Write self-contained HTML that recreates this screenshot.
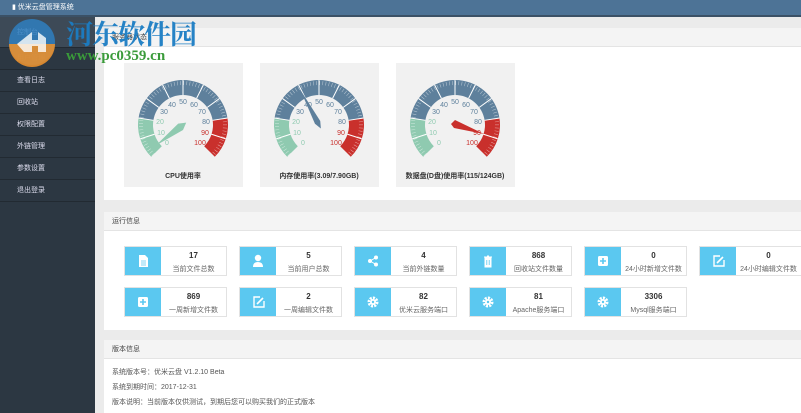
<!DOCTYPE html>
<html><head><meta charset="utf-8"><style>
*{margin:0;padding:0;box-sizing:border-box}
body{width:801px;height:413px;overflow:hidden;background:#ebebeb;font-family:"Liberation Sans","Noto Sans CJK SC",sans-serif;position:relative;color:#333}
.top{position:absolute;left:0;top:0;width:801px;height:17px;background:#4d7396;border-bottom:2px solid #3b5166;color:#fff;font-size:7px;line-height:15px;padding-left:12px}
.side{position:absolute;left:0;top:17px;width:95px;height:396px;background:#2c3742}
.side div{height:22px;line-height:22px;font-size:7px;color:#dde;padding-left:17px;border-bottom:1px solid #222a32}
.side .act{height:31px;line-height:31px;background:#3d4a57}
.panel{position:absolute;left:104px;width:697px;background:#fff}
.ph{height:19px;line-height:19px;background:#f4f4f4;border-bottom:1px solid #e4e4e4;font-size:7px;padding-left:8px;color:#444}
.g{position:absolute;top:35px;width:119px;height:124px;background:#f1f1f1}
.item{position:absolute;width:103px;height:30px;border:1px solid #e2e2e2;background:#fff}
.item .ic{position:absolute;left:0;top:0;width:36px;height:28px;background:#5bc8f0}
.item .n{position:absolute;left:36px;right:0;top:4px;text-align:center;font-size:8px;font-weight:bold;color:#333}
.item .l{position:absolute;left:36px;right:0;top:17px;text-align:center;font-size:7px;color:#666;white-space:nowrap}
.vt{font-size:7px;color:#555;position:absolute;left:8px}
</style></head><body>
<div class="top">▮ 优米云盘管理系统</div>
<div class="side">
<div class="act">控制台</div><div>用户管理</div><div>查看日志</div><div>回收站</div><div>权限配置</div><div>外链管理</div><div>参数设置</div><div>退出登录</div>
</div>

<div class="panel" style="top:28px;height:172px">
<div class="ph">服务器状态</div>
<div class="g" style="left:20px"><svg width="119" height="124" font-size="7" text-anchor="middle" font-family="Liberation Sans">
<path d="M27.2,93.8 A45,45 0 0 1 14.55,54.96 L29.37,57.31 A30,30 0 0 0 37.8,83.2 Z" fill="#8fcab0"/>
<path d="M14.55,54.96 A45,45 0 0 1 103.45,54.96 L88.63,57.31 A30,30 0 0 0 29.37,57.31 Z" fill="#5e809c"/>
<path d="M103.45,54.96 A45,45 0 0 1 90.8,93.8 L80.2,83.2 A30,30 0 0 0 88.63,57.31 Z" fill="#c9302c"/>
<path d="M29.3,91.7 A42,42 0 1 1 88.7,91.7" fill="none" stroke="#fff" stroke-width="4" stroke-dasharray="0.5 2.6" opacity=".6"/>
<g stroke="#fff" stroke-width="1"><line x1="16.2" y1="75.9" x2="30.47" y2="71.27"/><line x1="14.55" y1="54.96" x2="29.37" y2="57.31"/><line x1="22.6" y1="35.55" x2="34.73" y2="44.37"/><line x1="38.57" y1="21.9" x2="45.38" y2="35.27"/><line x1="59" y1="17" x2="59" y2="32"/><line x1="79.43" y1="21.9" x2="72.62" y2="35.27"/><line x1="95.4" y1="35.55" x2="83.27" y2="44.37"/><line x1="103.45" y1="54.96" x2="88.63" y2="57.31"/><line x1="101.8" y1="75.9" x2="87.53" y2="71.27"/></g>
<g dominant-baseline="middle"><text x="43" y="80" fill="#8fcab0">0</text><text x="37" y="70" fill="#8fcab0">10</text><text x="36" y="59" fill="#8fcab0">20</text><text x="40" y="49" fill="#5e809c">30</text><text x="48" y="42" fill="#5e809c">40</text><text x="59" y="39" fill="#5e809c">50</text><text x="70" y="42" fill="#5e809c">60</text><text x="78" y="49" fill="#5e809c">70</text><text x="82" y="59" fill="#5e809c">80</text><text x="81" y="70" fill="#c9302c">90</text><text x="76" y="80" fill="#c9302c">100</text></g>
<polygon points="59,66 55,59 59,28 63,59" fill="#8fcab0" transform="rotate(-127 59 62)"/>
<text x="59" y="115" font-weight="bold" fill="#333" font-family="Liberation Sans,Noto Sans CJK SC">CPU使用率</text></svg></div>

<div class="g" style="left:156px"><svg width="119" height="124" font-size="7" text-anchor="middle" font-family="Liberation Sans">
<path d="M27.2,93.8 A45,45 0 0 1 14.55,54.96 L29.37,57.31 A30,30 0 0 0 37.8,83.2 Z" fill="#8fcab0"/>
<path d="M14.55,54.96 A45,45 0 0 1 103.45,54.96 L88.63,57.31 A30,30 0 0 0 29.37,57.31 Z" fill="#5e809c"/>
<path d="M103.45,54.96 A45,45 0 0 1 90.8,93.8 L80.2,83.2 A30,30 0 0 0 88.63,57.31 Z" fill="#c9302c"/>
<path d="M29.3,91.7 A42,42 0 1 1 88.7,91.7" fill="none" stroke="#fff" stroke-width="4" stroke-dasharray="0.5 2.6" opacity=".6"/>
<g stroke="#fff" stroke-width="1"><line x1="16.2" y1="75.9" x2="30.47" y2="71.27"/><line x1="14.55" y1="54.96" x2="29.37" y2="57.31"/><line x1="22.6" y1="35.55" x2="34.73" y2="44.37"/><line x1="38.57" y1="21.9" x2="45.38" y2="35.27"/><line x1="59" y1="17" x2="59" y2="32"/><line x1="79.43" y1="21.9" x2="72.62" y2="35.27"/><line x1="95.4" y1="35.55" x2="83.27" y2="44.37"/><line x1="103.45" y1="54.96" x2="88.63" y2="57.31"/><line x1="101.8" y1="75.9" x2="87.53" y2="71.27"/></g>
<g dominant-baseline="middle"><text x="43" y="80" fill="#8fcab0">0</text><text x="37" y="70" fill="#8fcab0">10</text><text x="36" y="59" fill="#8fcab0">20</text><text x="40" y="49" fill="#5e809c">30</text><text x="48" y="42" fill="#5e809c">40</text><text x="59" y="39" fill="#5e809c">50</text><text x="70" y="42" fill="#5e809c">60</text><text x="78" y="49" fill="#5e809c">70</text><text x="82" y="59" fill="#5e809c">80</text><text x="81" y="70" fill="#c9302c">90</text><text x="76" y="80" fill="#c9302c">100</text></g>
<polygon points="59,66 56,59 59,22 62,59" fill="#5e809c" transform="rotate(-28 59 62)"/>
<text x="59" y="115" font-weight="bold" fill="#333" font-family="Liberation Sans,Noto Sans CJK SC">内存使用率(3.09/7.90GB)</text></svg></div>

<div class="g" style="left:292px"><svg width="119" height="124" font-size="7" text-anchor="middle" font-family="Liberation Sans">
<path d="M27.2,93.8 A45,45 0 0 1 14.55,54.96 L29.37,57.31 A30,30 0 0 0 37.8,83.2 Z" fill="#8fcab0"/>
<path d="M14.55,54.96 A45,45 0 0 1 103.45,54.96 L88.63,57.31 A30,30 0 0 0 29.37,57.31 Z" fill="#5e809c"/>
<path d="M103.45,54.96 A45,45 0 0 1 90.8,93.8 L80.2,83.2 A30,30 0 0 0 88.63,57.31 Z" fill="#c9302c"/>
<path d="M29.3,91.7 A42,42 0 1 1 88.7,91.7" fill="none" stroke="#fff" stroke-width="4" stroke-dasharray="0.5 2.6" opacity=".6"/>
<g stroke="#fff" stroke-width="1"><line x1="16.2" y1="75.9" x2="30.47" y2="71.27"/><line x1="14.55" y1="54.96" x2="29.37" y2="57.31"/><line x1="22.6" y1="35.55" x2="34.73" y2="44.37"/><line x1="38.57" y1="21.9" x2="45.38" y2="35.27"/><line x1="59" y1="17" x2="59" y2="32"/><line x1="79.43" y1="21.9" x2="72.62" y2="35.27"/><line x1="95.4" y1="35.55" x2="83.27" y2="44.37"/><line x1="103.45" y1="54.96" x2="88.63" y2="57.31"/><line x1="101.8" y1="75.9" x2="87.53" y2="71.27"/></g>
<g dominant-baseline="middle"><text x="43" y="80" fill="#8fcab0">0</text><text x="37" y="70" fill="#8fcab0">10</text><text x="36" y="59" fill="#8fcab0">20</text><text x="40" y="49" fill="#5e809c">30</text><text x="48" y="42" fill="#5e809c">40</text><text x="59" y="39" fill="#5e809c">50</text><text x="70" y="42" fill="#5e809c">60</text><text x="78" y="49" fill="#5e809c">70</text><text x="82" y="59" fill="#5e809c">80</text><text x="81" y="70" fill="#c9302c">90</text><text x="76" y="80" fill="#c9302c">100</text></g>
<polygon points="55,61 59,57 88,71 58,65" fill="#c9302c"/>
<text x="59" y="115" font-weight="bold" fill="#333" font-family="Liberation Sans,Noto Sans CJK SC">数据盘(D盘)使用率(115/124GB)</text></svg></div>
</div>

<div class="panel" style="top:212px;height:118px">
<div class="ph">运行信息</div>
</div>
<div class="item" style="left:124px;top:246px"><div class="ic"><svg width="36" height="28"><path d="M14 8h6l3 3v9h-9z" fill="#fff"/><path d="M16 14h5M16 16h5M16 18h5" stroke="#5bc8f0" stroke-width=".8"/></svg></div><div class="n">17</div><div class="l">当前文件总数</div></div>
<div class="item" style="left:239px;top:246px"><div class="ic"><svg width="36" height="28"><circle cx="18" cy="11" r="3.2" fill="#fff"/><path d="M13 20q0-5 5-5t5 5z" fill="#fff"/></svg></div><div class="n">5</div><div class="l">当前用户总数</div></div>
<div class="item" style="left:354px;top:246px"><div class="ic"><svg width="36" height="28"><g fill="#fff"><circle cx="15" cy="14" r="2"/><circle cx="21" cy="10.5" r="2"/><circle cx="21" cy="17.5" r="2"/></g><path d="M15 14L21 10.5M15 14L21 17.5" stroke="#fff"/></svg></div><div class="n">4</div><div class="l">当前外链数量</div></div>
<div class="item" style="left:469px;top:246px"><div class="ic"><svg width="36" height="28"><path d="M14 10h8M17 9h2M15 11h6v9h-6z" stroke="#fff" fill="#fff"/><path d="M16.8 13v5M19.2 13v5" stroke="#5bc8f0" stroke-width=".8"/></svg></div><div class="n">868</div><div class="l">回收站文件数量</div></div>
<div class="item" style="left:584px;top:246px"><div class="ic"><svg width="36" height="28"><rect x="13" y="9" width="10" height="10" rx="1.5" fill="#fff"/><path d="M18 11v6M15 14h6" stroke="#5bc8f0" stroke-width="1.6"/></svg></div><div class="n">0</div><div class="l">24小时新增文件数</div></div>
<div class="item" style="left:699px;top:246px"><div class="ic"><svg width="36" height="28"><path d="M20 9h-6v10h10v-6" stroke="#fff" stroke-width="1.4" fill="none"/><path d="M17 16l6-6" stroke="#fff" stroke-width="1.6"/></svg></div><div class="n">0</div><div class="l">24小时编辑文件数</div></div>
<div class="item" style="left:124px;top:287px"><div class="ic"><svg width="36" height="28"><rect x="13" y="9" width="10" height="10" rx="1.5" fill="#fff"/><path d="M18 11v6M15 14h6" stroke="#5bc8f0" stroke-width="1.6"/></svg></div><div class="n">869</div><div class="l">一周新增文件数</div></div>
<div class="item" style="left:239px;top:287px"><div class="ic"><svg width="36" height="28"><path d="M20 9h-6v10h10v-6" stroke="#fff" stroke-width="1.4" fill="none"/><path d="M17 16l6-6" stroke="#fff" stroke-width="1.6"/></svg></div><div class="n">2</div><div class="l">一周编辑文件数</div></div>
<div class="item" style="left:354px;top:287px"><div class="ic"><svg width="36" height="28"><circle cx="18" cy="14" r="4" fill="none" stroke="#fff" stroke-width="3" stroke-dasharray="2 1.1"/><circle cx="18" cy="14" r="3" fill="#fff"/><circle cx="18" cy="14" r="1.2" fill="#5bc8f0"/></svg></div><div class="n">82</div><div class="l">优米云服务端口</div></div>
<div class="item" style="left:469px;top:287px"><div class="ic"><svg width="36" height="28"><circle cx="18" cy="14" r="4" fill="none" stroke="#fff" stroke-width="3" stroke-dasharray="2 1.1"/><circle cx="18" cy="14" r="3" fill="#fff"/><circle cx="18" cy="14" r="1.2" fill="#5bc8f0"/></svg></div><div class="n">81</div><div class="l">Apache服务端口</div></div>
<div class="item" style="left:584px;top:287px"><div class="ic"><svg width="36" height="28"><circle cx="18" cy="14" r="4" fill="none" stroke="#fff" stroke-width="3" stroke-dasharray="2 1.1"/><circle cx="18" cy="14" r="3" fill="#fff"/><circle cx="18" cy="14" r="1.2" fill="#5bc8f0"/></svg></div><div class="n">3306</div><div class="l">Mysql服务端口</div></div>

<div class="panel" style="top:340px;height:73px">
<div class="ph">版本信息</div>
<div class="vt" style="top:27px">系统版本号：优米云盘 V1.2.10 Beta</div>
<div class="vt" style="top:42px">系统到期时间：2017-12-31</div>
<div class="vt" style="top:57px">版本说明：当前版本仅供测试，到期后您可以购买我们的正式版本</div>
</div>

<svg style="position:absolute;left:6px;top:17px" width="54" height="50"><circle cx="26" cy="25" r="23" fill="#2f7fc0" opacity=".85"/><path d="M3 27a23 23 0 0 0 46 0z" fill="#e9902f" opacity=".9"/><path d="M11 27l15-12v8h6v-8l8 6v14h-8v-6h-6v6h-8z" fill="#fff" opacity=".8"/></svg>
<div style="position:absolute;left:66px;top:13px;font:bold 27px 'Noto Serif CJK SC',serif;color:#1b7dc4;letter-spacing:-1px;opacity:.95">河东软件园</div>
<div style="position:absolute;left:66px;top:48px;font:bold 15px 'Liberation Serif',serif;color:#3a9b3a">www.pc0359.cn</div>
</body></html>
